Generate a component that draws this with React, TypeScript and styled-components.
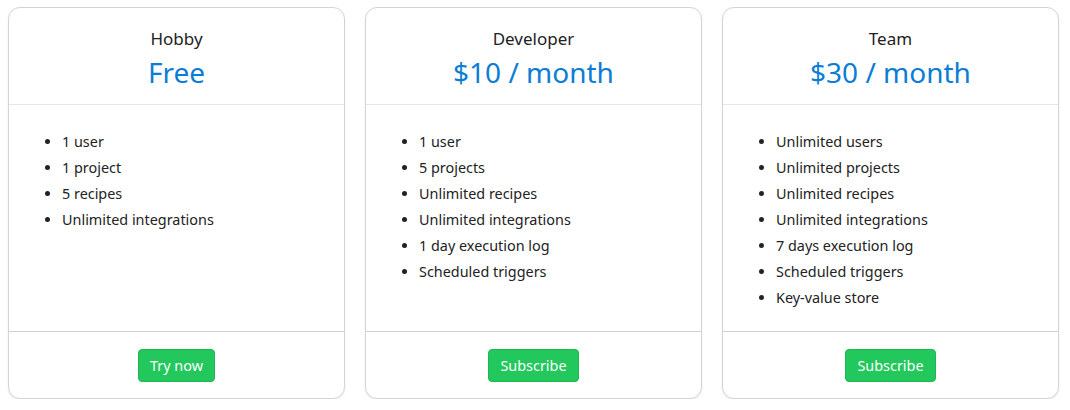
import styled, { createGlobalStyle } from "styled-components";

const GlobalStyle = createGlobalStyle`
  body {
    margin: 0;
    background: #ffffff;
    font-family: "Noto Sans", "Open Sans", sans-serif;
  }
`;

type Plan = {
  name: string;
  price: string;
  features: string[];
  action: string;
};

const plans: Plan[] = [
  {
    name: "Hobby",
    price: "Free",
    features: ["1 user", "1 project", "5 recipes", "Unlimited integrations"],
    action: "Try now",
  },
  {
    name: "Developer",
    price: "$10 / month",
    features: [
      "1 user",
      "5 projects",
      "Unlimited recipes",
      "Unlimited integrations",
      "1 day execution log",
      "Scheduled triggers",
    ],
    action: "Subscribe",
  },
  {
    name: "Team",
    price: "$30 / month",
    features: [
      "Unlimited users",
      "Unlimited projects",
      "Unlimited recipes",
      "Unlimited integrations",
      "7 days execution log",
      "Scheduled triggers",
      "Key-value store",
    ],
    action: "Subscribe",
  },
];

export default function App() {
  return (
    <>
      <GlobalStyle />
      <Pricing>
        {plans.map((plan) => (
          <Card key={plan.name}>
            <Header>
              <PlanName>{plan.name}</PlanName>
              <Price>{plan.price}</Price>
            </Header>
            <Body>
              <Features>
                {plan.features.map((f) => (
                  <Feature key={f}>{f}</Feature>
                ))}
              </Features>
            </Body>
            <Footer>
              <Button>{plan.action}</Button>
            </Footer>
          </Card>
        ))}
      </Pricing>
    </>
  );
}

const Pricing = styled.div`
  display: grid;
  grid-template-columns: repeat(3, 337px);
  gap: 20px;
  padding: 7px 0 0 8px;
`;

const Card = styled.div`
  height: 392px;
  box-sizing: border-box;
  display: flex;
  flex-direction: column;
  border: 1px solid #d4d4d4;
  border-radius: 12px;
  box-shadow: 0 1px 2px rgba(0, 0, 0, 0.08);
  background: #fff;
`;

const Header = styled.div`
  height: 97px;
  box-sizing: border-box;
  display: flex;
  flex-direction: column;
  align-items: center;
  padding-top: 19px;
  border-bottom: 1px solid #e6e6e6;
`;

const PlanName = styled.div`
  font-size: 17px;
  line-height: 24px;
  color: #222;
`;

const Price = styled.div`
  margin-top: 3px;
  font-size: 28px;
  line-height: 36px;
  color: #0b7dd4;
`;

const Body = styled.div`
  flex: 1;
  padding: 24px 0 0 0;
`;

const Features = styled.ul`
  margin: 0;
  padding-left: 53px;
`;

const Feature = styled.li`
  font-size: 14.4px;
  line-height: 26px;
  color: #222;
`;

const Footer = styled.div`
  height: 67px;
  box-sizing: border-box;
  border-top: 1px solid #cfcfcf;
  display: flex;
  justify-content: center;
  padding-top: 17px;
`;

const Button = styled.button`
  height: 33px;
  padding: 0 11px;
  border: 1px solid #1fb552;
  border-radius: 4px;
  background: #22c85c;
  color: #fff;
  font-family: "Noto Sans", "Open Sans", sans-serif;
  font-size: 14.4px;
  cursor: pointer;
`;
